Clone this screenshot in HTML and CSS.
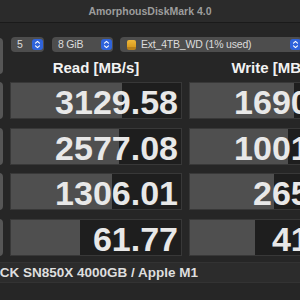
FILE: index.html
```html
<!DOCTYPE html>
<html>
<head>
<meta charset="utf-8">
<link rel="stylesheet" href="styles.css">
</head>
<body>
<div class="titlebar">AmorphousDiskMark 4.0</div>
<div class="window">
  <div class="grid">
    <div class="btn all"></div>
    <div class="toolbar">
      <div class="select s-count"><span class="label">5</span><span class="stepper"><svg width="11" height="11" viewBox="0 0 11 11"><path d="M3.5 4.2 L5.5 2.4 L7.5 4.2 M3.5 6.8 L5.5 8.6 L7.5 6.8" fill="none" stroke="#fff" stroke-width="1.1" stroke-linecap="round" stroke-linejoin="round"/></svg></span></div>
      <div class="select s-size"><span class="label">8 GiB</span><span class="stepper"><svg width="11" height="11" viewBox="0 0 11 11"><path d="M3.5 4.2 L5.5 2.4 L7.5 4.2 M3.5 6.8 L5.5 8.6 L7.5 6.8" fill="none" stroke="#fff" stroke-width="1.1" stroke-linecap="round" stroke-linejoin="round"/></svg></span></div>
      <div class="select s-drive"><span class="drive-icon"></span><span class="label">Ext_4TB_WD (1% used)</span><span class="stepper"><svg width="11" height="11" viewBox="0 0 11 11"><path d="M3.5 4.2 L5.5 2.4 L7.5 4.2 M3.5 6.8 L5.5 8.6 L7.5 6.8" fill="none" stroke="#fff" stroke-width="1.1" stroke-linecap="round" stroke-linejoin="round"/></svg></span></div>
    </div>
    <div class="head">Read [MB/s]</div>
    <div class="head">Write [MB/s]</div>

    <div class="btn"></div>
    <div class="cell"><div class="fill" style="width:65%"></div><span class="num">3129.58</span></div>
    <div class="cell"><div class="fill" style="width:61.2%"></div><span class="num">1690.29</span></div>

    <div class="btn"></div>
    <div class="cell"><div class="fill" style="width:63.8%"></div><span class="num">2577.08</span></div>
    <div class="cell"><div class="fill" style="width:57.9%"></div><span class="num">1001.60</span></div>

    <div class="btn"></div>
    <div class="cell"><div class="fill" style="width:59.6%"></div><span class="num">1306.01</span></div>
    <div class="cell"><div class="fill" style="width:49.7%"></div><span class="num">265.34</span></div>

    <div class="btn"></div>
    <div class="cell"><div class="fill" style="width:40.6%"></div><span class="num">61.77</span></div>
    <div class="cell"><div class="fill" style="width:38.1%"></div><span class="num">41.25</span></div>
  </div>
  <div class="footer">WD_BLACK SN850X 4000GB / Apple M1</div>
</div>
</body>
</html>
```
FILE: styles.css
```css
html, body {
  margin: 0;
  padding: 0;
}
body {
  width: 300px;
  height: 300px;
  overflow: hidden;
  background: #262626;
  font-family: "Liberation Sans", Arial, sans-serif;
  color: #e6e6e6;
}
.titlebar {
  height: 22px;
  line-height: 22px;
  background: #2b2b2b;
  border-bottom: 1px solid #1a1a1a;
  text-align: center;
  font-size: 10.5px;
  font-weight: bold;
  color: #9d9d9d;
}
.window {
  margin-left: -67px;
  width: 440px;
  padding-top: 14px;
}
.grid {
  display: grid;
  grid-template-columns: 70px 172px 172px;
  grid-template-rows: 15px 13px repeat(4, 37px);
  column-gap: 7px;
  row-gap: 8.5px;
}
.btn {
  background: #565656;
  border-radius: 4px;
}
.btn.all {
  grid-row: 1 / 3;
  margin-top: 1px;
}
.toolbar {
  grid-column: 2 / 4;
  display: flex;
  gap: 7px;
  padding-left: 1px;
}
.select {
  display: flex;
  align-items: center;
  height: 15px;
  background: #4d4d4d;
  border-radius: 4px;
  font-size: 10.5px;
  letter-spacing: -0.2px;
  color: #dcdcdc;
  box-sizing: border-box;
  padding: 0 1px 0 6px;
}
.select .label {
  flex: 1;
  line-height: 15px;
}
.s-count { width: 33px; margin-right: 1px; }
.s-size { width: 61px; }
.s-drive { width: 182px; padding-left: 7px; }
.stepper {
  width: 11px;
  height: 11px;
  background: #2f63db;
  border-radius: 3px;
  display: flex;
}
.drive-icon {
  width: 9px;
  height: 10px;
  margin-right: 5px;
  border-radius: 2px;
  background: linear-gradient(#f0b83a, #d99a1c 75%, #b9801a 75%);
}
.head {
  text-align: center;
  font-weight: bold;
  font-size: 15px;
  line-height: 13px;
  color: #f2f2f2;
}
.cell {
  position: relative;
  background: #1e1e1e;
  border: 1px solid #383838;
  display: flex;
  justify-content: flex-end;
  overflow: hidden;
}
.fill {
  position: absolute;
  left: 0;
  top: 0;
  bottom: 0;
  background: #4f4f4f;
}
.num {
  position: relative;
  font-weight: bold;
  font-size: 34px;
  line-height: 31px;
  padding-top: 4px;
  padding-right: 3px;
  color: #e8e8e8;
}
.footer {
  margin-top: 6.5px;
  height: 21px;
  box-sizing: border-box;
  background: #2c2c2c;
  border-top: 1px solid #333;
  border-bottom: 1px solid #333;
  padding-left: 9px;
  font-size: 13.5px;
  font-weight: bold;
  line-height: 19px;
  color: #dedede;
  white-space: nowrap;
}
```
